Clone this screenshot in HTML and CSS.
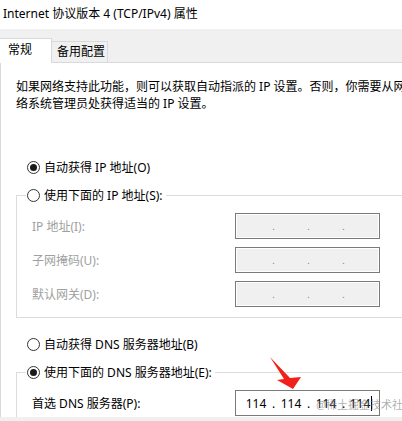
FILE: index.html
```html
<!DOCTYPE html>
<html lang="zh-CN">
<head>
<meta charset="utf-8">
<title>Internet 协议版本 4 (TCP/IPv4) 属性</title>
<link rel="stylesheet" href="styles.css">
</head>
<body>
<div class="window">
  <div class="titlebar">Internet 协议版本 4 (TCP/IPv4) 属性</div>
  <div class="tabstrip">
    <div class="tab active">常规</div>
    <div class="tab">备用配置</div>
  </div>
  <div class="panel">
    <p class="desc">如果网络支持此功能，则可以获取自动指派的 IP 设置。否则，你需要从网<br>络系统管理员处获得适当的 IP 设置。</p>

    <div class="radio-row first">
      <span class="radio checked"><span class="dot"></span></span>
      <span class="radio-label">自动获得 IP 地址(O)</span>
    </div>

    <div class="group">
      <div class="legend">
        <span class="radio"></span>
        <span class="radio-label">使用下面的 IP 地址(S):</span>
      </div>
      <div class="fields">
        <span class="field-label disabled">IP 地址(I):</span>
        <div class="ipbox disabled">
          <span class="seg"></span><span class="sep">.</span><span class="seg"></span><span class="sep">.</span><span class="seg"></span><span class="sep">.</span><span class="seg"></span>
        </div>
        <span class="field-label disabled">子网掩码(U):</span>
        <div class="ipbox disabled">
          <span class="seg"></span><span class="sep">.</span><span class="seg"></span><span class="sep">.</span><span class="seg"></span><span class="sep">.</span><span class="seg"></span>
        </div>
        <span class="field-label disabled">默认网关(D):</span>
        <div class="ipbox disabled">
          <span class="seg"></span><span class="sep">.</span><span class="seg"></span><span class="sep">.</span><span class="seg"></span><span class="sep">.</span><span class="seg"></span>
        </div>
      </div>
    </div>

    <div class="radio-row dns-auto">
      <span class="radio"></span>
      <span class="radio-label">自动获得 DNS 服务器地址(B)</span>
    </div>

    <div class="group dns">
      <div class="legend">
        <span class="radio checked"><span class="dot"></span></span>
        <span class="radio-label">使用下面的 DNS 服务器地址(E):</span>
      </div>
      <div class="fields">
        <span class="field-label">首选 DNS 服务器(P):</span>
        <div class="ipbox">
          <span class="seg">114</span><span class="sep">.</span><span class="seg">114</span><span class="sep">.</span><span class="seg">114</span><span class="sep">.</span><span class="seg">114<span class="caret"></span></span>
        </div>
      </div>
    </div>
  </div>

  <svg class="arrow" width="40" height="40" viewBox="0 0 40 40">
    <polygon points="2,2 22,23 33,22 25,34 9,25 16,24" fill="#f0211b"/>
  </svg>
  <div class="watermark">@稀土掘金技术社区</div>
</div>
</body>
</html>
```

FILE: styles.css
```css
html, body {
  margin: 0;
  padding: 0;
}

body {
  background: #f0f0f0;
  font-family: "Noto Sans", "Noto Sans CJK SC", sans-serif;
  font-size: 12px;
  color: #000;
  overflow: hidden;
}

.window {
  position: relative;
  width: 402px;
  height: 421px;
  overflow: hidden;
}

.titlebar {
  height: 29px;
  line-height: 28px;
  padding-left: 3px;
  background: #fff;
  white-space: nowrap;
}

.tabstrip {
  box-sizing: border-box;
  height: 34px;
  background: #f0f0f0;
  border-bottom: 1px solid #d9d9d9;
  display: flex;
  align-items: flex-end;
}

.tab {
  box-sizing: border-box;
  white-space: nowrap;
  line-height: 17px;
}

.tab.active {
  width: 52px;
  height: 25px;
  margin-bottom: -1px;
  padding: 2px 0 0 8px;
  background: #fff;
  border-top: 1px solid #d9d9d9;
  border-right: 1px solid #d9d9d9;
}

.tab:not(.active) {
  width: 56px;
  height: 21px;
  padding: 1px 0 0 5px;
  background: #f0f0f0;
  border-top: 1px solid #d9d9d9;
  border-right: 1px solid #d9d9d9;
}

.panel {
  box-sizing: border-box;
  height: 354px;
  background: #fff;
  border-left: 1px solid #d9d9d9;
  overflow: hidden;
}

.desc {
  margin: 0;
  padding: 15px 0 0 15px;
  line-height: 17px;
  white-space: nowrap;
}

.radio-row {
  display: flex;
  align-items: center;
  height: 20px;
  padding-left: 26px;
}

.radio-row.first {
  margin-top: 45px;
}

.radio-row.dns-auto {
  margin-top: 16px;
}

.radio {
  box-sizing: border-box;
  width: 13px;
  height: 13px;
  border: 1px solid #333;
  border-radius: 50%;
  background: #fff;
  display: flex;
  align-items: center;
  justify-content: center;
  flex: none;
}

.radio .dot {
  width: 7px;
  height: 7px;
  border-radius: 50%;
  background: #1a1a1a;
}

.radio-label {
  margin-left: 4px;
  white-space: nowrap;
  line-height: 17px;
}

.group {
  width: 430px;
  margin-top: 18px;
  margin-left: 15px;
  border-top: 1px solid #dcdcdc;
  border-left: 1px solid #dcdcdc;
  border-bottom: 1px solid #dcdcdc;
}

.legend {
  display: flex;
  align-items: center;
  width: max-content;
  height: 20px;
  margin-top: -11px;
  margin-left: 9px;
  padding: 0 3px 0 1px;
  background: #fff;
}

.fields {
  display: grid;
  grid-template-columns: 203px 145px;
  grid-auto-rows: 26px;
  row-gap: 8px;
  align-items: center;
  padding: 8px 0 10px 15px;
}

.field-label {
  white-space: nowrap;
  line-height: 17px;
}

.disabled {
  color: #a0a0a0;
}

.ipbox {
  box-sizing: border-box;
  width: 145px;
  height: 26px;
  border: 1px solid #7a7a7a;
  background: #fff;
  display: flex;
  align-items: center;
  padding-left: 5px;
  color: #000;
}

.ipbox.disabled {
  background: #f0f0f0;
  box-shadow: inset 0 0 0 1px #fff;
}

.seg {
  width: 30px;
  text-align: center;
  white-space: nowrap;
  line-height: 17px;
}

.sep {
  width: 5px;
  text-align: center;
  line-height: 17px;
}

.ipbox.disabled .sep {
  color: #777;
  font-size: 9px;
}

.caret {
  display: inline-block;
  width: 1px;
  height: 15px;
  background: #000;
  margin-left: 1px;
  vertical-align: -3px;
}

.arrow {
  position: absolute;
  left: 268px;
  top: 355px;
}

.watermark {
  position: absolute;
  left: 316px;
  top: 397px;
  font-size: 11px;
  line-height: 15px;
  color: rgba(120, 120, 120, 0.6);
  white-space: nowrap;
}
```
